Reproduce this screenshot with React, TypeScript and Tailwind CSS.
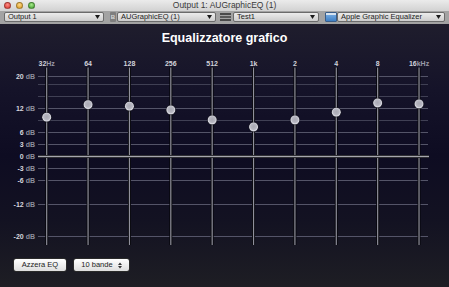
import React from 'react';

const FREQS = ['32', '64', '128', '256', '512', '1k', '2', '4', '8', '16'];
// knob centres, read off the reference
const KNOBS = [117.3, 104.7, 106.3, 110, 120, 127, 120, 112.3, 103, 104];
const GRID = [20, 18, 15, 12, 9, 6, 3, -3, -6, -12, -20];
const LABELS = [20, 12, 6, 3, 0, -3, -6, -12, -20];

const dbY = (db: number) => 156.5 - 4 * db;
const bandX = (i: number) => 46.7 + 41.37 * i;

function Popup({ label, width }: { label: string; width: number }) {
  return (
    <div
      className="flex h-[10px] items-center justify-between rounded-[2px] border border-[#6b6b6b] bg-gradient-to-b from-[#ececec] to-[#cdcdcd] pl-[3px] pr-[3px] text-[7.5px] leading-none text-[#222]"
      style={{ width }}
    >
      <span>{label}</span>
      <svg width="5" height="4" viewBox="0 0 5 4">
        <path d="M0 0h5L2.5 4z" fill="#1a1a1a" />
      </svg>
    </div>
  );
}

function Light({ from, to }: { from: string; to: string }) {
  return (
    <div
      className="h-[7.5px] w-[7.5px] rounded-full border border-black/30"
      style={{ background: `radial-gradient(circle at 50% 35%, ${from}, ${to})` }}
    />
  );
}

function EqChart() {
  return (
    <svg width="449" height="205" viewBox="0 45 449 205" className="block">
      <defs>
        <radialGradient id="knob" cx="50%" cy="45%" r="55%">
          <stop offset="0%" stopColor="#a9a9b3" />
          <stop offset="60%" stopColor="#b8b8c2" />
          <stop offset="85%" stopColor="#dcdce4" />
          <stop offset="100%" stopColor="#8a8a96" />
        </radialGradient>
      </defs>

      {/* horizontal grid */}
      {GRID.map((db) => (
        <line
          key={db}
          x1="38"
          x2="428"
          y1={dbY(db)}
          y2={dbY(db)}
          stroke={LABELS.includes(db) ? '#545468' : '#404054'}
          strokeWidth="1"
        />
      ))}

      {/* dB labels */}
      {LABELS.map((db) => (
        <text
          key={db}
          x="35"
          y={dbY(db) + 2.4}
          textAnchor="end"
          fontFamily="Liberation Sans, Arial, sans-serif"
          fontSize="7"
          fontWeight="bold"
        >
          <tspan fill="#d6d6de">{db}</tspan>
          <tspan fill="#8e8e9c"> dB</tspan>
        </text>
      ))}

      {/* band tracks */}
      {FREQS.map((f, i) => {
        const x = bandX(i);
        return (
          <g key={f}>
            <text
              x={x}
              y="65.5"
              textAnchor="middle"
              fontFamily="Liberation Sans, Arial, sans-serif"
              fontSize="7"
              fontWeight="bold"
            >
              <tspan fill="#d2d2da">{f}</tspan>
              {i === 0 && <tspan fill="#9a9aa8">Hz</tspan>}
              {i === 9 && <tspan fill="#9a9aa8">kHz</tspan>}
            </text>
            <line x1={x} x2={x} y1="67.5" y2="245" stroke="#07070c" strokeWidth="3" />
            <line x1={x} x2={x} y1="67.5" y2="245" stroke="#90909c" strokeWidth="1.2" />
          </g>
        );
      })}

      {/* 0 dB line sits over the tracks */}
      <line x1="38" x2="429" y1={dbY(0)} y2={dbY(0)} stroke="#08080c" strokeWidth="3" />
      <line x1="38" x2="429" y1={dbY(0)} y2={dbY(0)} stroke="#a6a6ae" strokeWidth="1.4" />

      {/* knobs */}
      {FREQS.map((f, i) => (
        <g key={f}>
          <circle cx={bandX(i)} cy={KNOBS[i]} r="5.2" fill="#1a1a22" opacity="0.6" />
          <circle cx={bandX(i)} cy={KNOBS[i]} r="4.5" fill="url(#knob)" />
        </g>
      ))}
    </svg>
  );
}

export default function App() {
  return (
    <div className="flex h-[287px] w-[449px] flex-col overflow-hidden font-['Liberation_Sans',Arial,sans-serif]">
      {/* title bar */}
      <div className="relative flex h-[11px] items-center bg-gradient-to-b from-[#ebebeb] to-[#d2d2d2] px-[3.5px]">
        <div className="flex gap-[4.5px]">
          <Light from="#ff8f88" to="#d8352d" />
          <Light from="#ffd88a" to="#d89a1c" />
          <Light from="#a8ec8c" to="#3c9a2a" />
        </div>
        <div className="absolute inset-x-0 top-0 flex h-[11px] items-center justify-center text-[8.5px] leading-none text-[#3a3a3a]">
          Output 1: AUGraphicEQ (1)
        </div>
      </div>

      {/* toolbar */}
      <div className="flex h-[13px] items-start bg-[#a3a3a3] pl-[4px] pt-[1px]">
        <Popup label="Output 1" width={100} />
        <div className="ml-[6px] flex h-[10px] w-[6px] items-center justify-center rounded-[1px] bg-[#7e7e7e] text-[6px] font-bold leading-none text-[#d8d8d8]">
          B
        </div>
        <div className="ml-[1px]">
          <Popup label="AUGraphicEQ (1)" width={99} />
        </div>
        <div className="ml-[4px] flex h-[10px] w-[11px] flex-col justify-center gap-[1.5px]">
          <div className="h-[1.5px] w-full bg-[#4a4a4a]" />
          <div className="h-[1.5px] w-full bg-[#5a5a5a]" />
          <div className="h-[1.5px] w-full bg-[#4a4a4a]" />
        </div>
        <div className="ml-[2px]">
          <Popup label="Test1" width={86} />
        </div>
        <div className="ml-[6px] flex h-[10px] w-[12px] flex-col overflow-hidden rounded-[1px] border border-[#3a5d88] bg-gradient-to-b from-[#7fb4e8] to-[#3e7fc4]">
          <div className="h-[2px] w-full bg-[#d8e4f0]" />
        </div>
        <div className="ml-[0px]">
          <Popup label="Apple Graphic Equalizer" width={108} />
        </div>
      </div>

      {/* EQ view */}
      <div className="flex flex-1 flex-col bg-[linear-gradient(180deg,#1f1d2d_0%,#151329_25%,#0e0c22_50%,#131222_75%,#1e1e24_100%)]">
        <div className="pt-[7px] text-center text-[12.5px] font-bold leading-[14px] text-white">
          Equalizzatore grafico
        </div>
        <EqChart />
        <div className="mt-[8px] flex gap-[6px] pl-[13px]">
          <button className="flex h-[14px] w-[54px] items-center justify-center rounded-[3px] border border-[#2a2a2a] bg-gradient-to-b from-[#ffffff] to-[#dedede] text-[7.5px] leading-none text-[#1a1a1a]">
            Azzera EQ
          </button>
          <button className="flex h-[14px] w-[57px] items-center justify-center gap-[5px] rounded-[3px] border border-[#2a2a2a] bg-gradient-to-b from-[#ffffff] to-[#dedede] text-[7.5px] leading-none text-[#1a1a1a]">
            <span>10 bande</span>
            <svg width="4" height="7" viewBox="0 0 4 7">
              <path d="M0 3L2 0.5L4 3z M0 4L2 6.5L4 4z" fill="#333" />
            </svg>
          </button>
        </div>
      </div>
    </div>
  );
}
